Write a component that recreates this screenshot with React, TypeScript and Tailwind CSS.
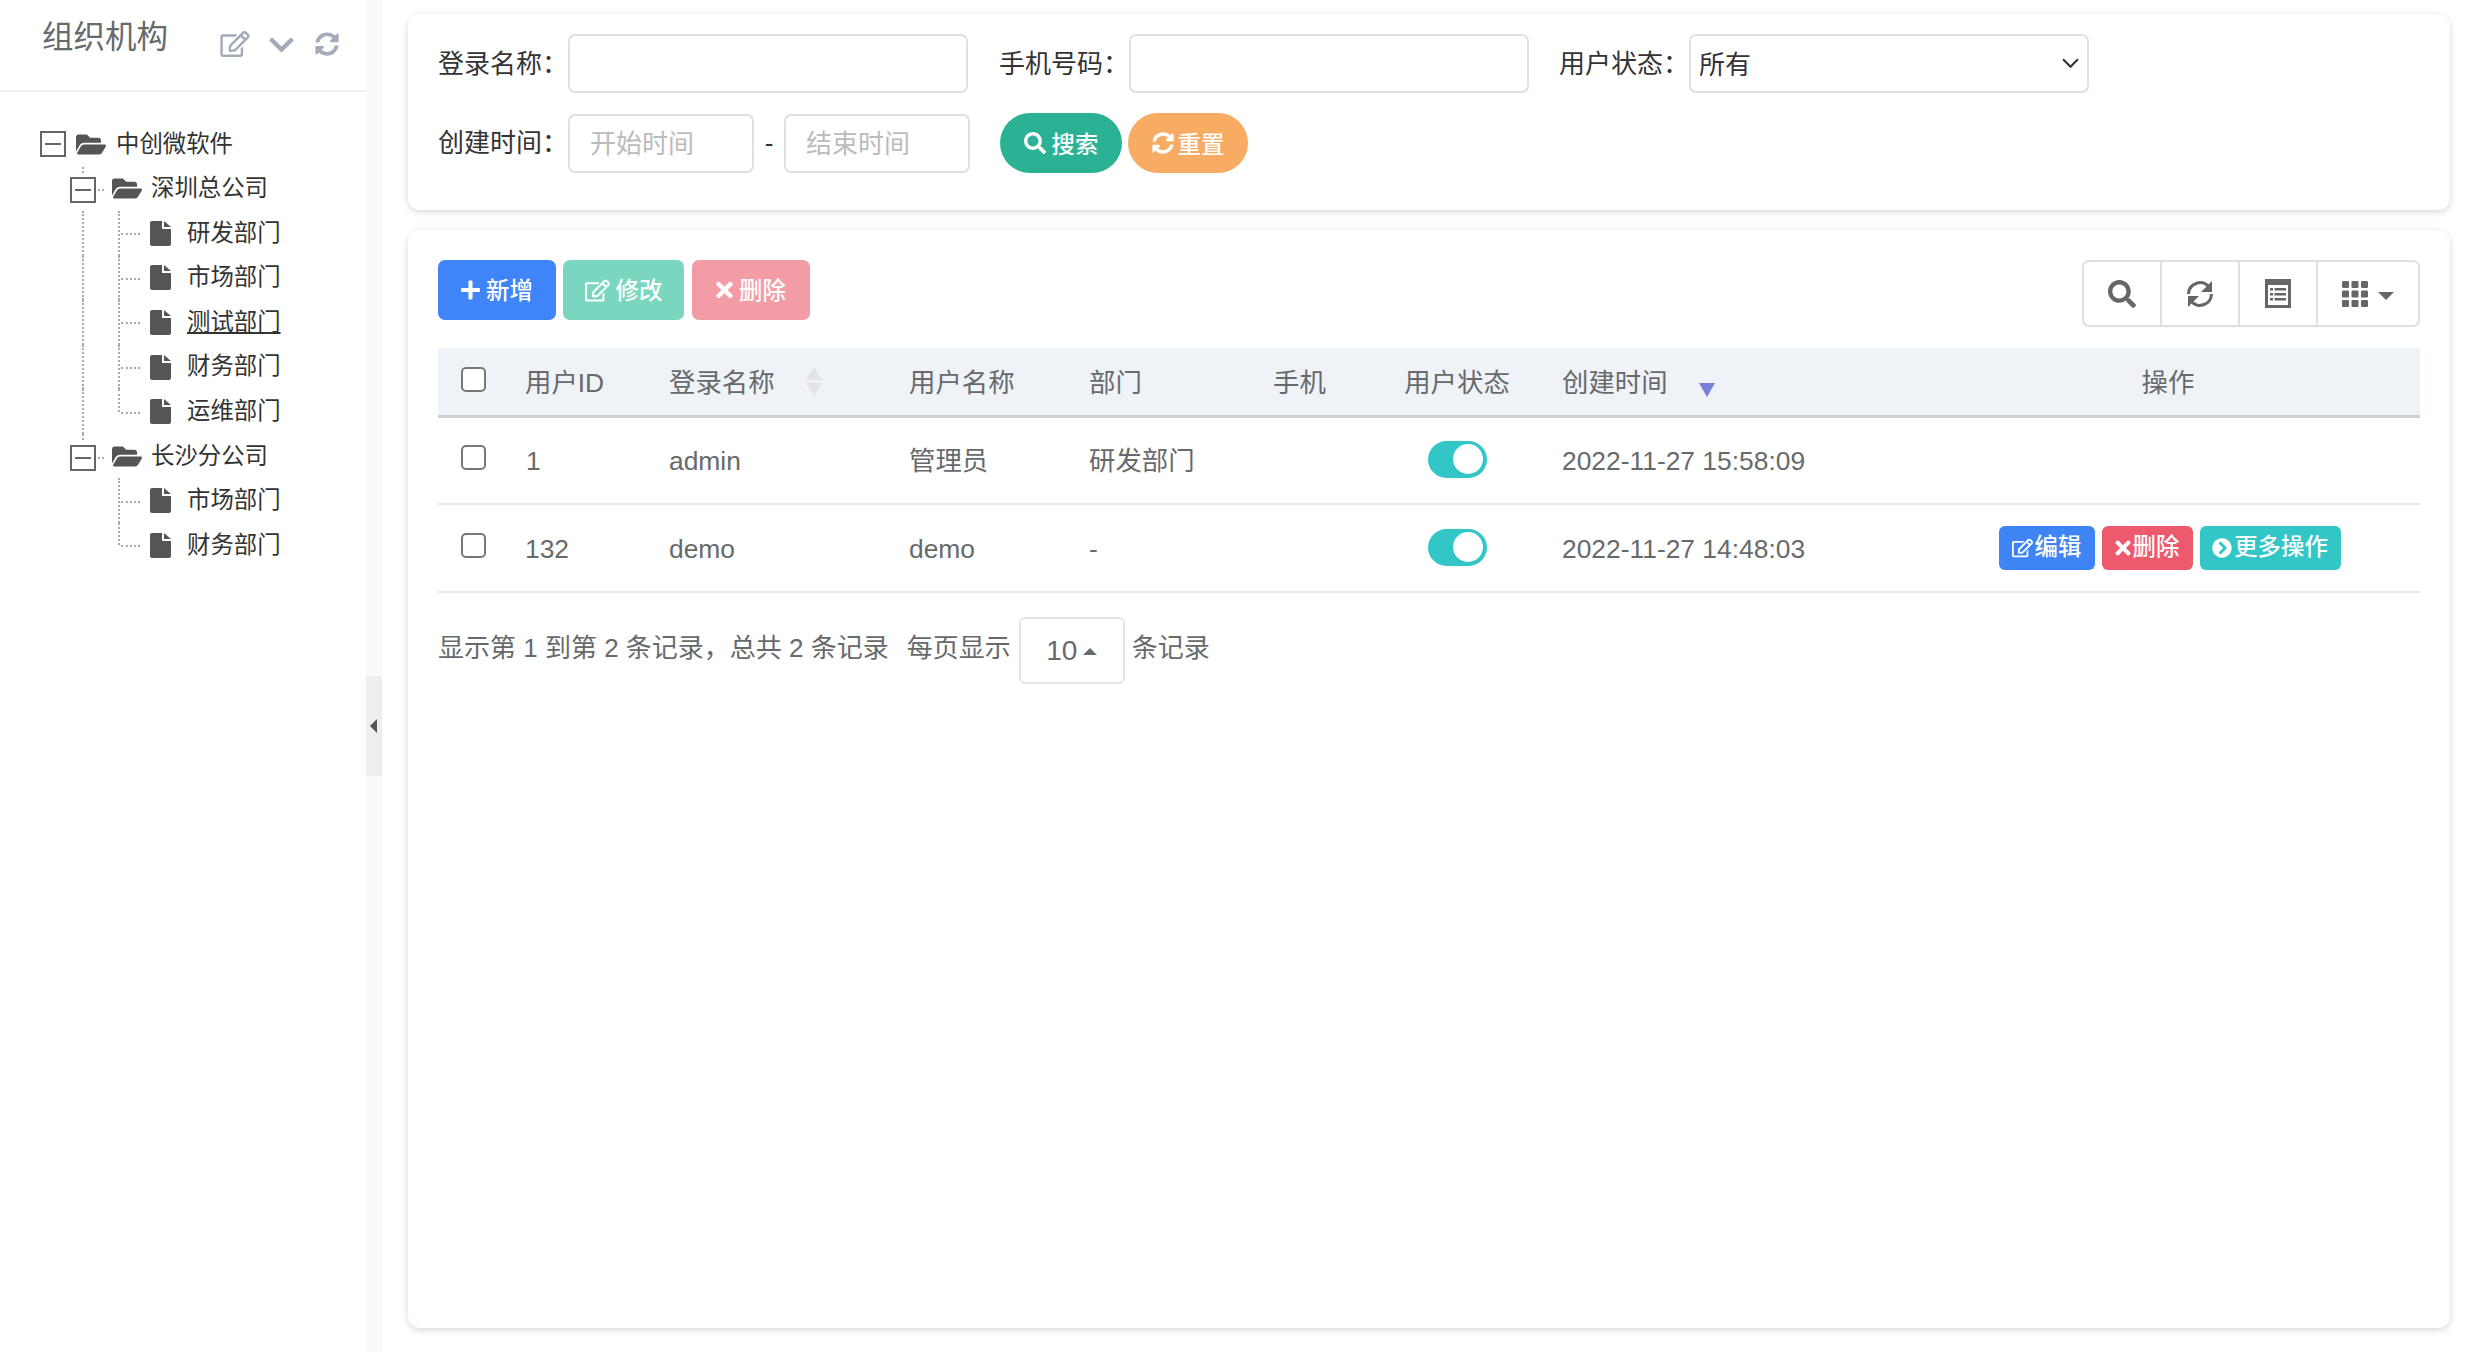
import { FaChevronCircleRight, FaChevronDown, FaFolderOpen, FaPlus, FaRegEdit, FaSearch, FaSyncAlt, FaTimes } from "react-icons/fa";

const font = { fontFamily: '"Liberation Sans", "Noto Sans CJK SC", sans-serif' };

type TreeRow = { label: string; kind: "root" | "branch" | "leaf"; lastLeaf?: boolean; outer?: boolean; active?: boolean };

const treeRows: TreeRow[] = [
  { label: "中创微软件", kind: "root" },
  { label: "深圳总公司", kind: "branch" },
  { label: "研发部门", kind: "leaf", outer: true },
  { label: "市场部门", kind: "leaf", outer: true },
  { label: "测试部门", kind: "leaf", outer: true, active: true },
  { label: "财务部门", kind: "leaf", outer: true },
  { label: "运维部门", kind: "leaf", outer: true, lastLeaf: true },
  { label: "长沙分公司", kind: "branch" },
  { label: "市场部门", kind: "leaf" },
  { label: "财务部门", kind: "leaf", lastLeaf: true },
];

function FileIcon() {
  return (
    <svg viewBox="0 0 21 25" className="h-[25px] w-[21px] shrink-0 fill-[#555]">
      <path d="M2 0h10v8h9v15a2 2 0 0 1-2 2H2a2 2 0 0 1-2-2V2a2 2 0 0 1 2-2z" />
      <path d="M14 0l7 6h-7z" />
    </svg>
  );
}

function ToggleBox() {
  return (
    <span className="flex h-[26px] w-[26px] shrink-0 items-center justify-center border-2 border-[#666] bg-white">
      <span className="h-[2px] w-[16px] bg-[#666]" />
    </span>
  );
}

function Tree() {
  return (
    <div className="mt-[30px] text-[23.4px] text-[#333]">
      {treeRows.map((row, i) => (
        <div key={i} className="relative flex h-[44.55px] items-center">
          {row.kind === "root" && (
            <div className="flex items-center pl-[40px]">
              <ToggleBox />
              <FaFolderOpen className="ml-[10px] h-[27px] w-[30px] text-[#555]" />
              <span className="ml-[10px]">{row.label}</span>
            </div>
          )}
          {row.kind === "branch" && (
            <div className="flex items-center pl-[70px]">
              <span className="absolute left-[82px] top-0 h-[6px] border-l-2 border-dotted border-[#aaa]" />
              <span className="mt-[3px]">
                <ToggleBox />
              </span>
              <span className="mt-[3px] ml-[2px] w-[6px] border-t-2 border-dotted border-[#aaa]" />
              <FaFolderOpen className="ml-[8px] h-[27px] w-[30px] text-[#555]" />
              <span className="ml-[9px]">{row.label}</span>
            </div>
          )}
          {row.kind === "leaf" && (
            <div className="flex items-center pl-[150px]">
              {row.outer && <span className="absolute left-[82px] top-0 h-full border-l-2 border-dotted border-[#aaa]" />}
              <span
                className={
                  row.lastLeaf
                    ? "absolute left-[118px] top-0 h-1/2 border-l-2 border-dotted border-[#aaa]"
                    : "absolute left-[118px] top-0 h-full border-l-2 border-dotted border-[#aaa]"
                }
              />
              <span className="absolute left-[121px] top-1/2 w-[19px] border-t-2 border-dotted border-[#aaa]" />
              <FileIcon />
              <span className={row.active ? "ml-[16px] underline underline-offset-2" : "ml-[16px]"}>{row.label}</span>
            </div>
          )}
        </div>
      ))}
    </div>
  );
}

function Sidebar() {
  return (
    <aside className="w-[366px] shrink-0">
      <div className="flex h-[92px] items-start border-b-2 border-[#eee] pl-[42px]">
        <span className="mt-[17px] text-[31.5px] leading-[40px] text-[#676a6c]">组织机构</span>
        <div className="mt-[29px] ml-[52px] flex items-center text-[#a3abba]">
          <FaRegEdit className="h-[26px] w-[30px]" />
          <FaChevronDown className="ml-[19px] mt-[2px] h-[28px] w-[25px]" />
          <FaSyncAlt className="ml-[21px] h-[24px] w-[24px]" />
        </div>
      </div>
      <Tree />
    </aside>
  );
}

function Field({ label, children }: { label: string; children: React.ReactNode }) {
  return (
    <div className="flex items-center">
      <label className="w-[130px] shrink-0 whitespace-nowrap leading-[36px]">{label}：</label>
      {children}
    </div>
  );
}

const inputCls =
  "h-[59px] rounded-[7px] border-2 border-[#e0e0e0] bg-white px-[20px] pt-[3px] text-[26px] outline-none placeholder:text-[#bbb]";

function SearchCard() {
  return (
    <section className="h-[196px] shrink-0 rounded-[12px] bg-white pl-[30px] pt-[20px] text-[26px] text-[#333] shadow-[0_2px_7px_rgba(0,0,0,0.16)]">
      <div className="flex items-center">
        <Field label="登录名称">
          <input className={`${inputCls} w-[400px]`} />
        </Field>
        <div className="ml-[31px]">
          <Field label="手机号码">
            <input className={`${inputCls} w-[400px]`} />
          </Field>
        </div>
        <div className="ml-[30px]">
          <Field label="用户状态">
            <div className="relative w-[400px]">
              <select className={`${inputCls} w-full appearance-none !px-[8px] text-[#333]`} defaultValue="所有">
                <option>所有</option>
              </select>
              <svg viewBox="0 0 16 10" className="absolute right-[10px] top-[24px] h-[11px] w-[17px] fill-none stroke-[#333] stroke-2">
                <path d="M1 1l7 7 7-7" />
              </svg>
            </div>
          </Field>
        </div>
      </div>
      <div className="mt-[20px] flex items-center">
        <Field label="创建时间">
          <input className={`${inputCls} w-[186px]`} placeholder="开始时间" />
          <span className="w-[30px] text-center">-</span>
          <input className={`${inputCls} w-[186px]`} placeholder="结束时间" />
        </Field>
        <button className="ml-[30px] flex h-[60px] w-[122px] items-center justify-center gap-[6px] rounded-full bg-[#2bb294] text-[23.4px] font-medium text-white">
          <FaSearch className="h-[22px] w-[22px]" />
          <span className="pt-[5px]">搜索</span>
        </button>
        <button className="ml-[6px] flex h-[60px] w-[120px] items-center justify-center gap-[4px] rounded-full bg-[#f8ac63] text-[23.4px] font-medium text-white">
          <FaSyncAlt className="h-[22px] w-[22px]" />
          <span className="pt-[5px]">重置</span>
        </button>
      </div>
    </section>
  );
}

function ToolButton({ className, icon, label }: { className: string; icon: React.ReactNode; label: string }) {
  return (
    <button className={`flex h-[60px] items-center justify-center gap-[6px] rounded-[7px] text-[23.4px] font-medium text-white ${className}`}>
      {icon}
      <span className="pt-[3px]">{label}</span>
    </button>
  );
}

function RefreshGlyph() {
  return (
    <svg viewBox="0 0 28 28" className="h-[28px] w-[28px]">
      <g>
        <path d="M2.5 14a11.5 11.5 0 0 1 20-7.5" fill="none" stroke="#666" strokeWidth="3" />
        <path d="M26 1v11H15z" fill="#666" />
      </g>
      <g transform="rotate(180 14 14)">
        <path d="M2.5 14a11.5 11.5 0 0 1 20-7.5" fill="none" stroke="#666" strokeWidth="3" />
        <path d="M26 1v11H15z" fill="#666" />
      </g>
    </svg>
  );
}

function ListGlyph() {
  return (
    <svg viewBox="0 0 26 29" className="h-[29px] w-[26px] fill-[#666]">
      <path fillRule="evenodd" d="M0 0h26v29H0zM3 6v20h20V6z" />
      {[9, 14, 19].map((y) => (
        <g key={y}>
          <rect x="5" y={y} width="3" height="2.5" />
          <rect x="9.5" y={y} width="11.5" height="2.5" />
        </g>
      ))}
    </svg>
  );
}

function GridGlyph() {
  const cells = [0, 9.5, 19];
  return (
    <svg viewBox="0 0 26 26" className="h-[26px] w-[26px] fill-[#666]">
      {cells.map((y) => cells.map((x) => <rect key={`${x}-${y}`} x={x} y={y} width="7" height="7" rx="1.2" />))}
    </svg>
  );
}

function Toolbar() {
  return (
    <div className="flex h-[88px] items-start justify-between">
      <div className="flex">
        <ToolButton className="w-[118px] bg-[#3f84f8]" icon={<FaPlus className="h-[22px] w-[19px]" />} label="新增" />
        <ToolButton className="ml-[7px] w-[121px] bg-[#7ad6be]" icon={<FaRegEdit className="h-[23px] w-[25px]" />} label="修改" />
        <ToolButton className="ml-[8px] w-[118px] bg-[#f39ca6]" icon={<FaTimes className="h-[24px] w-[17px]" />} label="删除" />
      </div>
      <div className="flex h-[67px] w-[338px] rounded-[7px] border-2 border-[#e0e0e0] text-[#666]">
        <div className="flex w-[78px] items-center justify-center border-r-2 border-[#e0e0e0]">
          <FaSearch className="h-[28px] w-[28px]" />
        </div>
        <div className="flex w-[78px] items-center justify-center border-r-2 border-[#e0e0e0]">
          <RefreshGlyph />
        </div>
        <div className="flex w-[78px] items-center justify-center border-r-2 border-[#e0e0e0]">
          <ListGlyph />
        </div>
        <div className="flex flex-1 items-center justify-center gap-[10px]">
          <GridGlyph />
          <span className="mt-[4px] h-0 w-0 border-x-[8px] border-t-[8px] border-x-transparent border-t-[#666]" />
        </div>
      </div>
    </div>
  );
}

function Checkbox() {
  return <span className="ml-[23px] block h-[25px] w-[25px] rounded-[5px] border-2 border-[#777] bg-white" />;
}

function Switch() {
  return (
    <span className="mx-auto flex h-[37px] w-[59px] items-center justify-end rounded-full bg-[#33c6c6] pr-[4px]">
      <span className="h-[30px] w-[30px] rounded-full bg-white" />
    </span>
  );
}

function ActionButton({ className, icon, label }: { className: string; icon: React.ReactNode; label: string }) {
  return (
    <button className={`flex h-[44px] items-center justify-center gap-[2px] rounded-[6px] text-[23.4px] font-medium text-white ${className}`}>
      {icon}
      {label}
    </button>
  );
}

const users = [
  { id: "1", login: "admin", name: "管理员", dept: "研发部门", time: "2022-11-27 15:58:09", actions: false },
  { id: "132", login: "demo", name: "demo", dept: "-", time: "2022-11-27 14:48:03", actions: true },
];

function UserTable() {
  return (
    <table className="w-full table-fixed border-collapse text-left text-[26.4px] text-[#676a6c]">
      <colgroup>
        <col className="w-[87px]" />
        <col className="w-[144px]" />
        <col className="w-[240px]" />
        <col className="w-[180px]" />
        <col className="w-[184px]" />
        <col className="w-[79px]" />
        <col className="w-[210px]" />
        <col className="w-[354px]" />
        <col className="w-[504px]" />
      </colgroup>
      <thead>
        <tr className="h-[68px] border-b-[3px] border-[#cfcfd4] bg-[#eff2f7]">
          <th className="pb-[4px] font-normal"><Checkbox /></th>
          <th className="pt-[5px] font-normal">用户ID</th>
          <th className="pt-[5px] font-normal">
            <span className="relative block">
              登录名称
              <span className="absolute left-[137px] top-[3px] flex flex-col gap-[3px]">
                <span className="h-0 w-0 border-x-[8px] border-b-[13px] border-x-transparent border-b-[#e2e4e8]" />
                <span className="h-0 w-0 border-x-[8px] border-t-[13px] border-x-transparent border-t-[#e2e4e8]" />
              </span>
            </span>
          </th>
          <th className="pt-[5px] font-normal">用户名称</th>
          <th className="pt-[5px] font-normal">部门</th>
          <th className="pt-[5px] font-normal">手机</th>
          <th className="pt-[5px] text-center font-normal">用户状态</th>
          <th className="pt-[5px] font-normal">
            <span className="relative block">
              创建时间
              <span className="absolute left-[137px] top-[19px] h-0 w-0 border-x-[8px] border-t-[14px] border-x-transparent border-t-[#7880d8]" />
            </span>
          </th>
          <th className="pt-[5px] text-center font-normal">操作</th>
        </tr>
      </thead>
      <tbody>
        {users.map((u) => (
          <tr key={u.id} className="h-[88px] border-b-2 border-[#e9e9ec]">
            <td className="pb-[6px]"><Checkbox /></td>
            <td className="pt-[4px]"><span className={u.id === "1" ? "pl-[1px]" : ""}>{u.id}</span></td>
            <td className="pt-[4px]">{u.login}</td>
            <td className="pt-[4px]">{u.name}</td>
            <td className="pt-[4px]">{u.dept}</td>
            <td />
            <td className="pb-[2px]"><Switch /></td>
            <td className="pt-[4px]">{u.time}</td>
            <td className="pl-[3px]">
              {u.actions && (
                <div className="flex justify-center gap-[7px]">
                  <ActionButton className="w-[96px] bg-[#3f84f5]" icon={<FaRegEdit className="h-[20px] w-[21px]" />} label="编辑" />
                  <ActionButton className="w-[91px] bg-[#ed5a6e]" icon={<FaTimes className="h-[22px] w-[16px]" />} label="删除" />
                  <ActionButton className="w-[141px] bg-[#33c6c6]" icon={<FaChevronCircleRight className="h-[20px] w-[20px]" />} label="更多操作" />
                </div>
              )}
            </td>
          </tr>
        ))}
      </tbody>
    </table>
  );
}

function Pagination() {
  return (
    <div className="mt-[24px] flex items-center text-[26px] text-[#676a6c]">
      <span className="mb-[4px] whitespace-nowrap">显示第 1 到第 2 条记录，总共 2 条记录</span>
      <span className="mb-[4px] ml-[18px] whitespace-nowrap">每页显示</span>
      <span className="ml-[8px] flex h-[67px] w-[106px] items-center justify-center gap-[6px] rounded-[6px] border-2 border-[#e4e4e4] text-[28px]">
        10
        <span className="mt-[2px] h-0 w-0 border-x-[7px] border-b-[7px] border-x-transparent border-b-[#676a6c]" />
      </span>
      <span className="mb-[4px] ml-[7px] whitespace-nowrap">条记录</span>
    </div>
  );
}

export default function App() {
  return (
    <div className="flex h-screen w-full overflow-hidden bg-white" style={font}>
      <Sidebar />
      <div className="w-[16px] shrink-0 bg-[#fafafa]">
        <div className="mt-[676px] flex h-[100px] items-center justify-center bg-[#eeeeee]">
          <span className="ml-[-2px] h-0 w-0 border-y-[7px] border-r-[7px] border-y-transparent border-r-[#555]" />
        </div>
      </div>
      <main className="flex min-w-0 flex-1 flex-col gap-[20px] pb-[24px] pl-[26px] pr-[24px] pt-[14px]">
        <SearchCard />
        <section className="flex-1 rounded-[12px] bg-white px-[30px] pt-[30px] shadow-[0_2px_7px_rgba(0,0,0,0.16)]">
          <Toolbar />
          <UserTable />
          <Pagination />
        </section>
      </main>
    </div>
  );
}
